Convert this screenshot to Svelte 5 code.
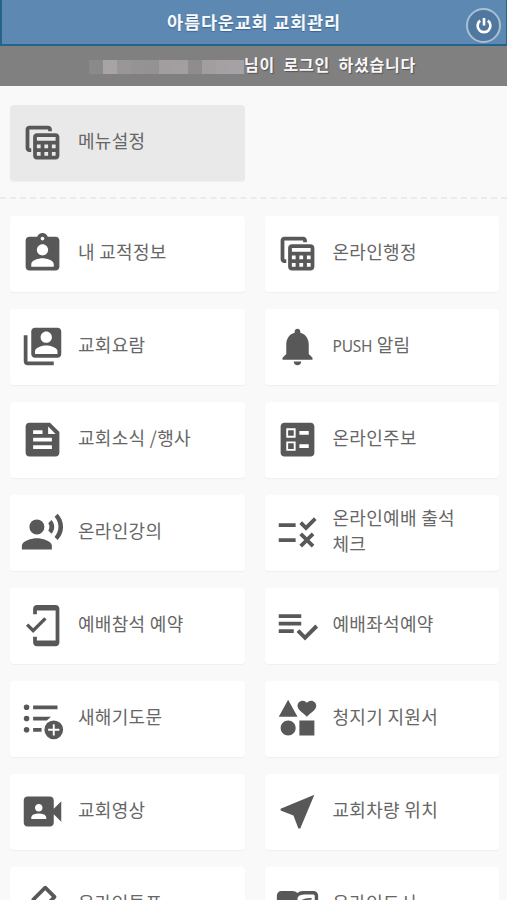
<script lang="ts">
  type Icon = keyof typeof icons;
  type MenuItem = { label: string; icon: Icon; latin?: string };

  const icons = {
    table: 'M19 7H9c-1.1 0-2 .9-2 2v10c0 1.1.9 2 2 2h10c1.1 0 2-.9 2-2V9c0-1.1-.9-2-2-2zm0 2v2H9V9h10zm-6 6v-2h2v2h-2zm2 2v2h-2v-2h2zm-4-2H9v-2h2v2zm6-2h2v2h-2v-2zm-8 4h2v2H9v-2zm8 2v-2h2v2h-2zM6 17H5c-1.1 0-2-.9-2-2V5c0-1.1.9-2 2-2h10c1.1 0 2 .9 2 2v1h-2V5H5v10h1v2z',
    badge: 'M19 3h-4.18C14.4 1.84 13.3 1 12 1c-1.3 0-2.4.84-2.82 2H5c-1.1 0-2 .9-2 2v14c0 1.1.9 2 2 2h14c1.1 0 2-.9 2-2V5c0-1.1-.9-2-2-2zm-7 0c.55 0 1 .45 1 1s-.45 1-1 1-1-.45-1-1 .45-1 1-1zm0 4c1.66 0 3 1.34 3 3s-1.34 3-3 3-3-1.34-3-3 1.34-3 3-3zm6 12H6v-1.4c0-2 4-3.1 6-3.1s6 1.1 6 3.1V19z',
    album: 'M4 6H2v14c0 1.1.9 2 2 2h14v-2H4V6zm16-4H8c-1.1 0-2 .9-2 2v12c0 1.1.9 2 2 2h12c1.1 0 2-.9 2-2V4c0-1.1-.9-2-2-2zm-6 2c1.66 0 3 1.34 3 3s-1.34 3-3 3-3-1.34-3-3 1.34-3 3-3zm6 12H8v-1.5c0-1.99 4-3 6-3s6 1.01 6 3V16z',
    bell: 'M12 22c1.1 0 2-.9 2-2h-4c0 1.1.89 2 2 2zm6-6v-5c0-3.07-1.64-5.64-4.5-6.32V4c0-.83-.67-1.5-1.5-1.5s-1.5.67-1.5 1.5v.68C7.63 5.36 6 7.92 6 11v5l-2 2v1h16v-1l-2-2z',
    feed: 'M16 3H5c-1.1 0-2 .9-2 2v14c0 1.1.9 2 2 2h14c1.1 0 2-.9 2-2V8l-5-5zM7 7h5v2H7V7zm10 10H7v-2h10v2zm0-4H7v-2h10v2zm-2-4V5l4 4h-4z',
    ballot: 'M13 9.5h5v-2h-5v2zm0 7h5v-2h-5v2zm6 4.5H5c-1.1 0-2-.9-2-2V5c0-1.1.9-2 2-2h14c1.1 0 2 .9 2 2v14c0 1.1-.9 2-2 2zM6 11h5V6H6v5zm1-4h3v3H7V7zM6 18h5v-5H6v5zm1-4h3v3H7v-3z',
    voice: 'M9 5a4 4 0 1 0 0 8 4 4 0 0 0 0-8zm0 10c-2.67 0-8 1.34-8 4v2h16v-2c0-2.66-5.33-4-8-4zm7.76-9.64l-1.68 1.69c.84 1.18.84 2.71 0 3.89l1.68 1.69c2.02-2.02 2.02-5.07 0-7.27zM20.07 2l-1.63 1.63c2.77 3.02 2.77 7.56 0 10.74L20.07 16c3.9-3.89 3.91-9.95 0-14z',
    rule: 'M16.54 11L13 7.46l1.41-1.41 2.12 2.12 4.24-4.24 1.41 1.41L16.54 11zM11 7H2v2h9V7zm10 6.41L19.59 12 17 14.59 14.41 12 13 13.41 15.59 16 13 18.59 14.41 20 17 17.41 19.59 20 21 18.59 18.41 16 21 13.41zM11 15H2v2h9v-2z',
    mobile: 'M19 1H9c-1.1 0-2 .9-2 2v3h2V4h10v16H9v-2H7v3c0 1.1.9 2 2 2h10c1.1 0 2-.9 2-2V3c0-1.1-.9-2-2-2zM7.01 13.47l-2.55-2.55-1.27 1.27L7 16l7.19-7.19-1.27-1.27-5.91 5.93z',
    playlist: 'M14 10H2v2h12v-2zm0-4H2v2h12V6zM2 16h8v-2H2v2zm19.5-4.5L23 13l-6.99 7-4.51-4.5L13 14l3.01 3 5.49-5.5z',
    listAdd: 'M7 5h13v2H7V5zm0 6h9.5l-2.2 2H7v-2zm0 6h4.5v2H7v-2zM3.5 4.5a1.5 1.5 0 1 0 0 3 1.5 1.5 0 0 0 0-3zm0 6a1.5 1.5 0 1 0 0 3 1.5 1.5 0 0 0 0-3zm0 6a1.5 1.5 0 1 0 0 3 1.5 1.5 0 0 0 0-3zM18 13a5 5 0 1 0 0 10 5 5 0 0 0 0-10zm3 5.5h-2.5V21h-1v-2.5H15v-1h2.5V15h1v2.5H21v1z',
    shapes: 'M7.02 13c-2.21 0-4 1.79-4 4s1.79 4 4 4 4-1.79 4-4-1.79-4-4-4zM13 13v8h8v-8h-8zM7 2L2 11h10L7 2zm12.25.5c-1.06 0-1.81.56-2.25 1.17-.44-.61-1.19-1.17-2.25-1.17C13.19 2.5 12 3.78 12 5.25c0 2 2.42 3.42 5 5.75 2.58-2.33 5-3.75 5-5.75 0-1.47-1.19-2.75-2.75-2.75z',
    video: 'M18 10.48V6c0-1.1-.9-2-2-2H4c-1.1 0-2 .9-2 2v12c0 1.1.9 2 2 2h12c1.1 0 2-.9 2-2v-4.48l4 3.98v-11l-4 3.98zM10 8c1.1 0 2 .9 2 2s-.9 2-2 2-2-.9-2-2 .9-2 2-2zm4 8H6v-.57c0-.81.48-1.53 1.22-1.85.85-.37 1.79-.58 2.78-.58.99 0 1.93.21 2.78.58.74.32 1.22 1.04 1.22 1.85V16z',
    near: 'M21 3L3 10.53v.98l6.84 2.65L12.48 21h.98L21 3z',
    vote: 'M18 13h-.68l-2 2h1.91L19 17H5l1.78-2h2.05l-2-2H6l-3 3v4c0 1.1.89 2 1.99 2H19c1.1 0 2-.89 2-2v-4l-3-3zm-1-5.05l-4.95 4.95-3.54-3.54 4.95-4.95L17 7.95zm-4.24-5.66L6.39 8.66c-.39.39-.39 1.02 0 1.41l4.95 4.95c.39.39 1.02.39 1.41 0l6.36-6.36c.39-.39.39-1.02 0-1.41L14.16 2.3c-.38-.4-1.01-.4-1.4-.01z',
    book: 'M3.5 4.8h5.7c1.2 0 2.100.4 2.800 1.100.7-.7 1.600-1.100 2.800-1.100h5.700c1.400 0 2.500 1 2.500 2.400V19h-8c-1.300 0-2.300.4-3 1-.7-.6-1.700-1-3-1H1V7.200c0-1.400 1.100-2.400 2.500-2.400zM21.200 7.500c0-.5-.4-.8-.9-.8H15.500c-2.200.1-3.500.9-3.500 2.400v8.600c.8-.5 1.700-.7 2.700-.7h6.500V7.500zM14 9.700c1.300-.9 3.300-1.300 5.500-1.200v1c-2.200 0-4 .3-5.500 1.200z',
  };

  const setting: MenuItem = { label: '메뉴설정', icon: 'table' };

  const menus: MenuItem[] = [
    { label: '내 교적정보', icon: 'badge' },
    { label: '온라인행정', icon: 'table' },
    { label: '교회요람', icon: 'album' },
    { label: ' 알림', icon: 'bell', latin: 'PUSH' },
    { label: '교회소식 /행사', icon: 'feed' },
    { label: '온라인주보', icon: 'ballot' },
    { label: '온라인강의', icon: 'voice' },
    { label: '온라인예배 출석체크', icon: 'rule' },
    { label: '예배참석 예약', icon: 'mobile' },
    { label: '예배좌석예약', icon: 'playlist' },
    { label: '새해기도문', icon: 'listAdd' },
    { label: '청지기 지원서', icon: 'shapes' },
    { label: '교회영상', icon: 'video' },
    { label: '교회차량 위치', icon: 'near' },
    { label: '온라인투표', icon: 'vote' },
    { label: '온라인도서', icon: 'book' },
  ];

  // shades of the masked user name
  const mask = ['#8b8a8a', '#a8a3a5', '#989697', '#959394', '#949293', '#a29ea0', '#a39fa1', '#8e8c8d', '#a29ea0', '#a5a0a3', '#a6a1a4'];
</script>

{#snippet card(item: MenuItem, active: boolean)}
  <button class="card" class:active>
    <svg class="icon" viewBox="0 0 24 24">
      <path d={icons[item.icon]} fill-rule={item.icon === 'book' ? 'evenodd' : 'nonzero'} />
    </svg>
    <span class="label">{#if item.latin}<span class="latin">{item.latin}</span>{/if}{item.label}</span>
  </button>
{/snippet}

<div class="app">
  <header>
    <h1>아름다운교회 교회관리</h1>
    <button class="power" aria-label="로그아웃">
      <svg viewBox="0 0 20 20">
        <path d="M6.2 4.6a6.4 6.4 0 1 0 7.6 0M10 2v7.5" />
      </svg>
    </button>
  </header>

  <div class="login">
    <span class="mask">
      {#each mask as shade}
        <i style="background: {shade}"></i>
      {/each}
    </span>
    <strong>님이 로그인 하셨습니다</strong>
  </div>

  <main>
    <section class="grid top">
      {@render card(setting, true)}
    </section>
    <section class="grid">
      {#each menus as item}
        {@render card(item, false)}
      {/each}
    </section>
  </main>
</div>

<style>
  :global(body) {
    margin: 0;
    background: #f9f9f9;
  }

  .app {
    height: 900px;
    overflow: hidden;
    font-family: "Noto Sans CJK KR", sans-serif;
    background: #f9f9f9;
  }

  header {
    position: relative;
    display: flex;
    align-items: center;
    justify-content: center;
    box-sizing: border-box;
    height: 46px;
    border: 1px solid #23648a;
    border-width: 0 1px 2px 2px;
    background: #5c88b1;
  }

  h1 {
    margin: 0;
    font-size: 17.5px;
    line-height: 26px;
    letter-spacing: 0.8px;
    color: #f6f8fb;
    text-shadow: 0 1px 1px #3e6790;
  }

  .power {
    position: absolute;
    top: 8px;
    right: 5px;
    display: flex;
    align-items: center;
    justify-content: center;
    box-sizing: border-box;
    width: 35px;
    height: 35px;
    padding: 0;
    border: 2px solid #a9bfd4;
    border-radius: 50%;
    background: #4f779f;
  }

  .power svg {
    width: 20px;
    height: 20px;
    fill: none;
    stroke: #fff;
    stroke-width: 2.6;
  }

  .login {
    display: flex;
    align-items: center;
    box-sizing: border-box;
    height: 40px;
    padding-left: 89px;
    background: #808080;
  }

  .mask {
    display: flex;
    width: 155px;
    height: 14px;
    margin-top: 1px;
  }

  .mask i {
    flex: 1;
  }

  .login strong {
    margin-top: -5px;
    font-size: 16px;
    line-height: 24px;
    letter-spacing: 0.8px;
    word-spacing: 4px;
    color: #f8f6f8;
    white-space: nowrap;
    text-shadow: 1px 1px 1px #555;
  }

  .grid {
    display: grid;
    grid-template-columns: 1fr 1fr;
    grid-auto-rows: 76px;
    gap: 17px 20px;
    padding: 17px 8px 0 10px;
  }

  .grid.top {
    padding-top: 19px;
    padding-bottom: 16px;
    border-bottom: 2px dashed #ebebeb;
  }

  .card {
    display: flex;
    align-items: center;
    gap: 13px;
    min-width: 0;
    padding: 0 38px 2px 10px;
    border: 0;
    border-radius: 4px;
    background: #fff;
    box-shadow: 0 1px 1px #efefef;
    font-family: inherit;
    text-align: left;
  }

  .card.active {
    background: #e9e9e9;
  }

  .icon {
    flex: none;
    width: 45px;
    height: 45px;
    fill: #585858;
  }

  .label {
    margin-top: -4px;
    font-size: 18px;
    line-height: 26px;
    letter-spacing: 0.3px;
    color: #666;
    word-break: break-all;
  }

  .latin {
    font-family: "Noto Sans", sans-serif;
    font-size: 15.5px;
    line-height: 1;
    letter-spacing: -0.2px;
  }
</style>
